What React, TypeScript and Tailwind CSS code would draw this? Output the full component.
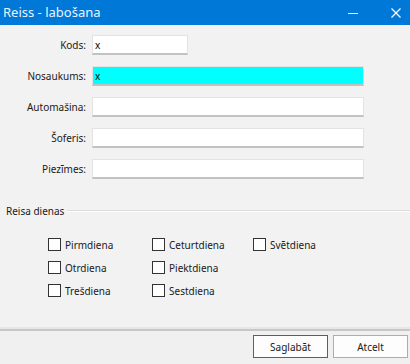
import React from "react";

const font = { fontFamily: '"Noto Sans", "Open Sans", sans-serif' };

function Field({ label, wide = true, value = "", highlight = false }: { label: string; wide?: boolean; value?: string; highlight?: boolean }) {
  return (
    <div className="flex items-center h-[20px]">
      <div className="w-[86px] text-right text-[10px] text-[#1a1a1a] leading-none">{label}</div>
      <div
        className={`ml-[6px] h-[20px] border border-[#e3e3e3] border-b-[2px] border-b-[#c2c2c2] ${wide ? "w-[272px]" : "w-[96px]"} ${highlight ? "bg-[#00ffff]" : "bg-white"} flex items-center px-[2px] text-[10px] text-black leading-none`}
      >
        {value}
      </div>
    </div>
  );
}

function Check({ label }: { label: string }) {
  return (
    <div className="flex items-center h-[13px]">
      <div className="w-[13px] h-[13px] border border-[#333333] bg-white shrink-0" />
      <span className="ml-[4px] text-[10px] text-[#1a1a1a] leading-none">{label}</span>
    </div>
  );
}

export default function App() {
  return (
    <div className="w-[410px] h-[364px] bg-[#f0f0f0] flex flex-col overflow-hidden" style={font}>
      <div className="h-[25px] bg-[#0078d7] flex items-center shrink-0">
        <span className="ml-[3px] text-[13px] text-[#eaf3fc] leading-none">Reiss - labošana</span>
        <div className="ml-auto flex items-center">
          <svg width="12" height="12" viewBox="0 0 12 12" className="mr-[31px]">
            <line x1="1" y1="6.5" x2="11" y2="6.5" stroke="#eaf3fc" strokeWidth="1" />
          </svg>
          <svg width="12" height="12" viewBox="0 0 12 12" className="mr-[8px]">
            <line x1="1.5" y1="1.5" x2="10.5" y2="10.5" stroke="#ffffff" strokeWidth="1.3" />
            <line x1="10.5" y1="1.5" x2="1.5" y2="10.5" stroke="#ffffff" strokeWidth="1.3" />
          </svg>
        </div>
      </div>
      <div className="bg-[#f2f2f2] flex flex-col h-[302px] shrink-0">
        <div className="pt-[10px] flex flex-col gap-[11px]">
          <Field label="Kods:" wide={false} value="x" />
          <Field label="Nosaukums:" value="x" highlight />
          <Field label="Automašina:" />
          <Field label="Šoferis:" />
          <Field label="Piezīmes:" />
        </div>
        <div className="mt-[25px] flex items-center h-[14px]">
          <span className="ml-[6px] text-[10px] text-[#1a1a1a] leading-none">Reisa dienas</span>
          <div className="flex-1 ml-[3px] h-[2px] border-t border-t-[#dcdcdc] border-b border-b-white" />
        </div>
        <div className="mt-[20px] ml-[48px] grid grid-cols-[104px_101px_auto] gap-y-[10px]">
          <Check label="Pirmdiena" />
          <Check label="Ceturtdiena" />
          <Check label="Svētdiena" />
          <Check label="Otrdiena" />
          <Check label="Piektdiena" />
          <div />
          <Check label="Trešdiena" />
          <Check label="Sestdiena" />
        </div>
      </div>
      <div className="h-[2px] bg-[#e6e6e6] shrink-0" />
      <div className="h-[2px] bg-[#c8c8c8] shrink-0" />
      <div className="flex justify-end pt-[4px] pr-[2px] gap-[5px]">
        <button className="w-[75px] h-[23px] border border-[#0078d7] bg-[#fdfdfd] text-[10px] text-[#1a1a1a] leading-none" style={font}>
          Saglabāt
        </button>
        <button className="w-[75px] h-[23px] border border-[#adadad] bg-[#fdfdfd] text-[10px] text-[#1a1a1a] leading-none" style={font}>
          Atcelt
        </button>
      </div>
    </div>
  );
}
